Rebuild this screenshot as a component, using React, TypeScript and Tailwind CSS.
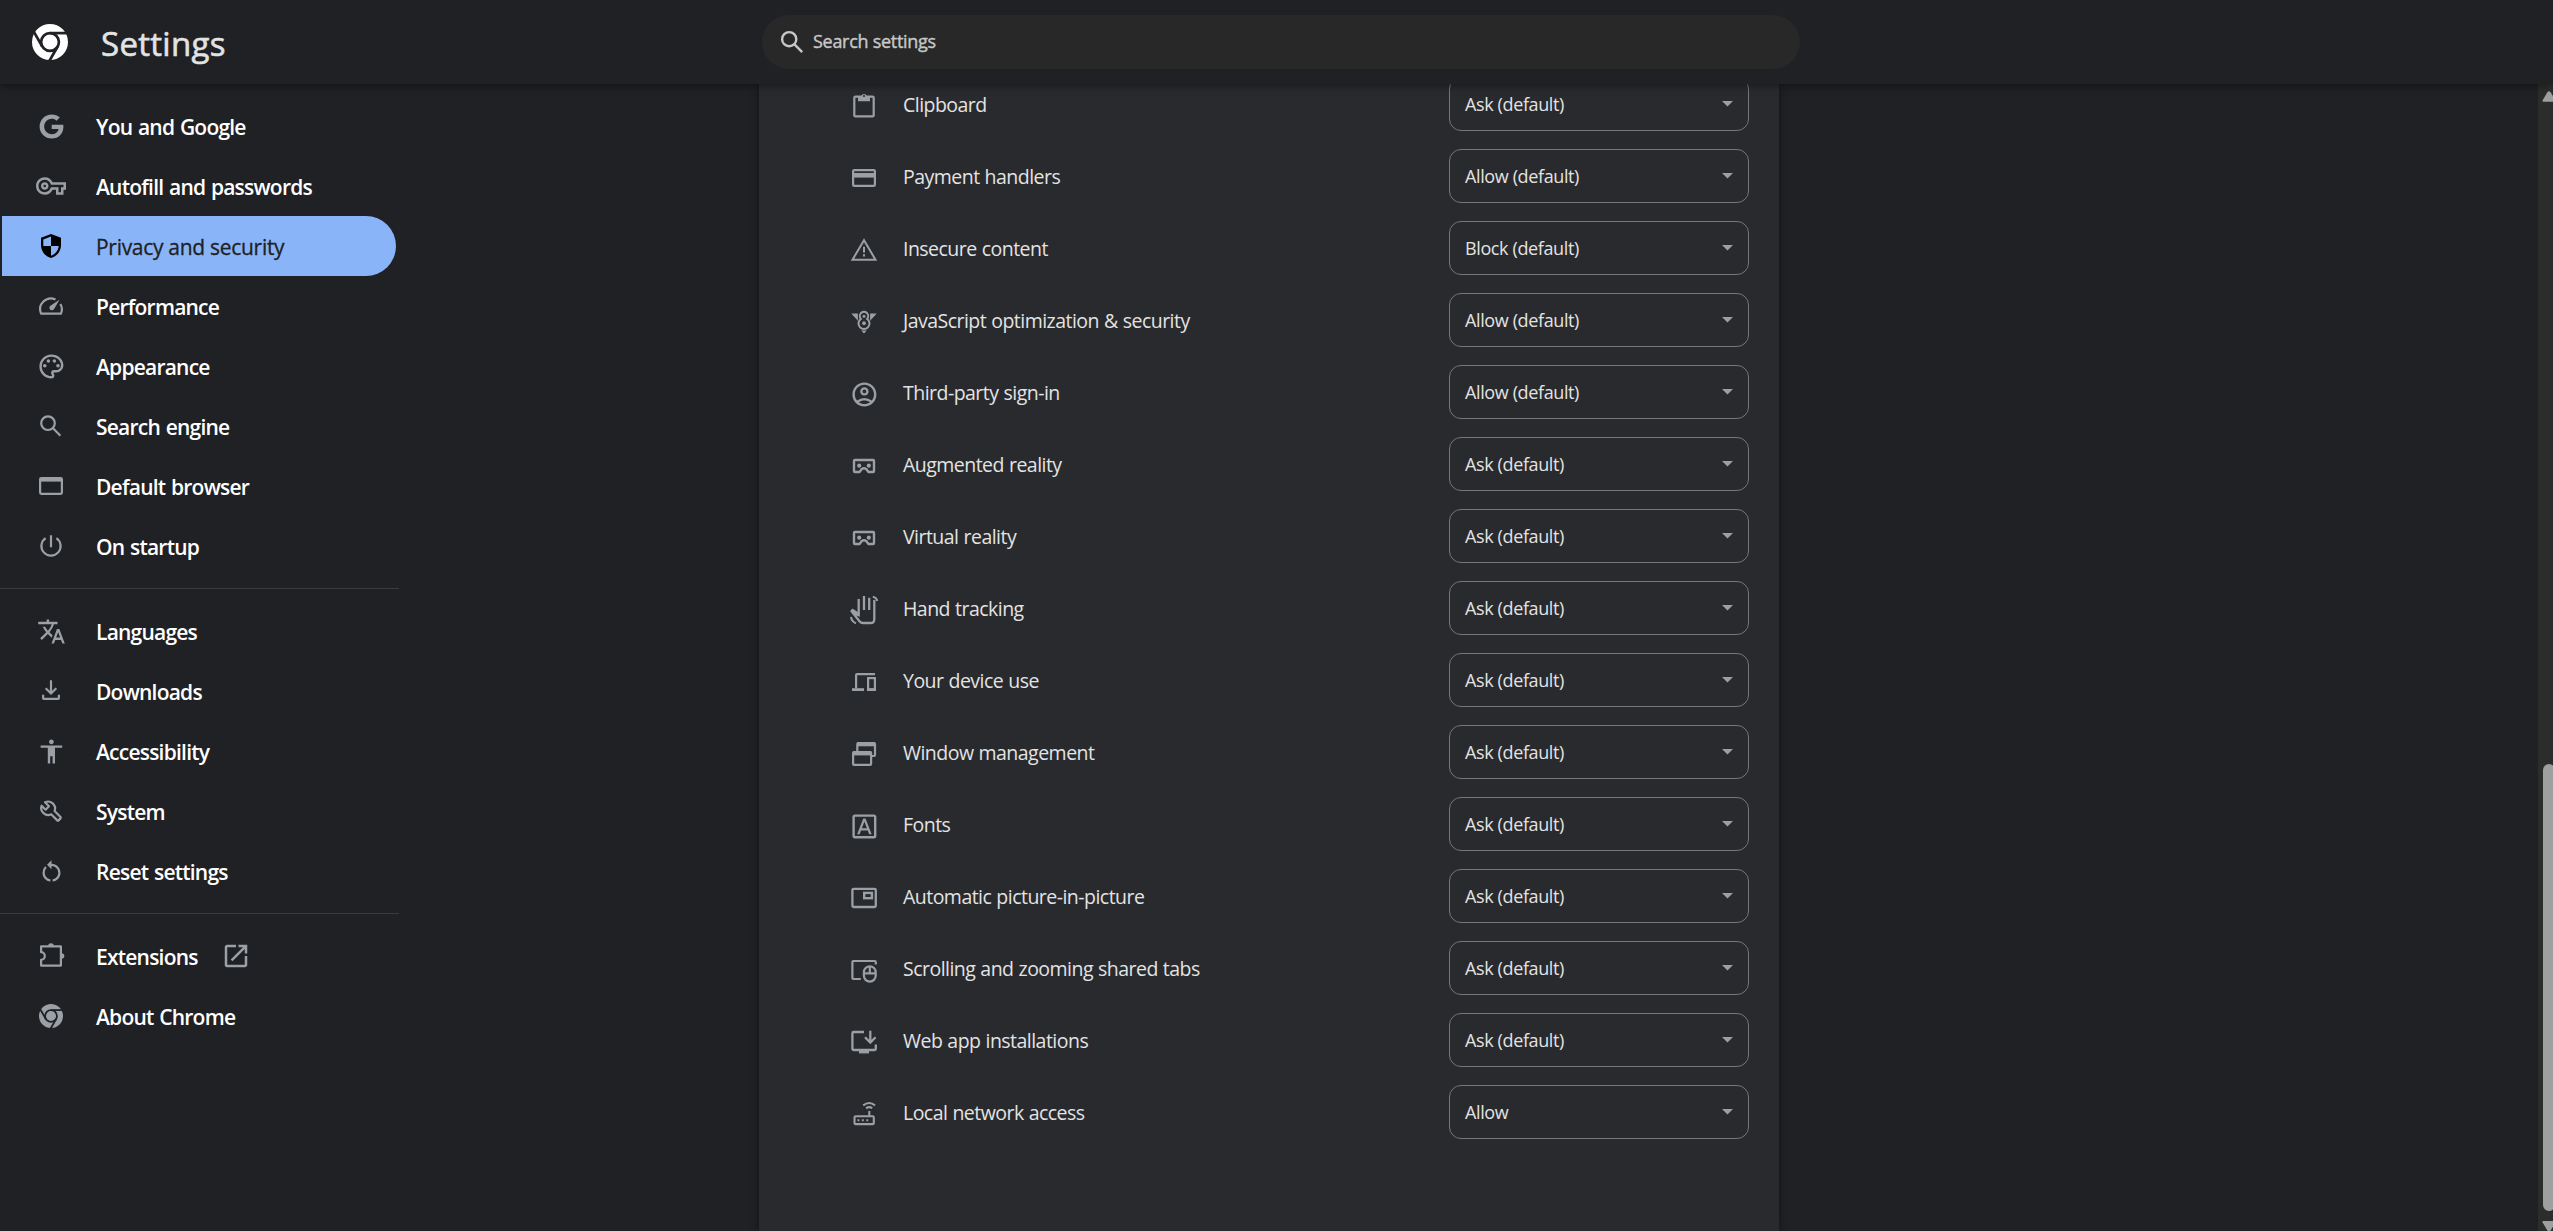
import type { ReactNode } from "react";
import { FaGoogle } from "react-icons/fa";
import {
  MdAccessibility,
  MdOpenInNew,
  MdOutlineAccountCircle,
  MdOutlineFontDownload,
  MdOutlinePalette,
  MdOutlineVpnKey,
  MdRestartAlt,
  MdTranslate,
} from "react-icons/md";

// 30x30 line icon, strokes follow the text colour
function Glyph({ children, w = 2.2 }: { children: ReactNode; w?: number }) {
  return (
    <svg width="30" height="30" viewBox="0 0 30 30" fill="none" stroke="currentColor" strokeWidth={w}>
      {children}
    </svg>
  );
}

const solid = { fill: "currentColor", stroke: "none" };

function ChromeMark({ size, bg }: { size: number; bg: string }) {
  return (
    <svg width={size} height={size} viewBox="-18 -18 36 36">
      <circle r="18" fill="currentColor" />
      <g stroke={bg} strokeWidth="2.7" fill="none">
        <circle r="8.9" />
        <path d="M0-8.9H20" />
        <path d="M0-8.9H20" transform="rotate(120)" />
        <path d="M0-8.9H20" transform="rotate(240)" />
      </g>
    </svg>
  );
}

const shield = (
  <Glyph>
    <path
      {...solid}
      fillRule="evenodd"
      d="M15 3 5 6.7V14c0 6.2 4.2 11.4 10 13 5.800-1.600 10-6.800 10-13V6.700L15 3ZM15 5.600V15H7.300V8.400L15 5.600ZM15 15h7.700c-.5 4.500-3.400 8.300-7.700 9.700V15Z"
    />
  </Glyph>
);

const speed = (
  <Glyph>
    <path d="M19.500 8.400A10.900 10.900 0 0 0 5 22.600H25A10.900 10.900 0 0 0 24.400 13" strokeLinejoin="round" />
    <path {...solid} d="M23.500 8.800 18.100 18a2.500 2.500 0 1 1-3.700-3.200L23.500 8.800Z" />
  </Glyph>
);

const magnifier = (
  <Glyph>
    <circle cx="12" cy="12.200" r="6.800" />
    <path d="m16.800 17 7.600 7.700" />
  </Glyph>
);

const browserWindow = (
  <Glyph>
    <rect x="4.100" y="7.100" width="21.800" height="15.700" rx="1.200" />
    <path d="M4 8.800h22" strokeWidth="3.600" />
  </Glyph>
);

const power = (
  <Glyph>
    <path d="M9.600 7.100A9.600 9.600 0 1 0 20.400 7.100M15 4.300v12" />
  </Glyph>
);

const download = (
  <Glyph>
    <path d="M15 4.300v13M9.700 12.200l5.300 5.300 5.300-5.300M7.100 18.800v3.200q0 .8.800.8h14.200q.8 0 .8-.8v-3.200" />
  </Glyph>
);

const wrench = (
  <Glyph w={2.200}>
    <path
      d="M9 6.300A7 7 0 0 1 18.600 15L24.300 20.800Q25.200 21.700 24.300 22.600L22.800 24.100Q21.900 25 21 24.100L15.200 18.300A7 7 0 0 1 5.600 9.700L9.600 13.700 13 10.300Z"
      strokeLinejoin="round"
    />
  </Glyph>
);

const puzzle = (
  <Glyph>
    <path
      d="M5.100 5.400H24.900V24.600H5.100V18.800c2 0 3.700-1.600 3.700-3.800s-1.700-3.800-3.700-3.800V5.400Z"
      strokeLinejoin="round"
    />
    <path {...solid} d="M12.200 5a2.800 2.800 0 0 1 5.600 0ZM25.500 12.200a2.800 2.800 0 0 1 0 5.600Z" />
  </Glyph>
);

const clipboard = (
  <Glyph>
    <rect x="5.300" y="5.600" width="19.400" height="19.800" rx="1.200" />
    <path {...solid} d="M9 5h3.300a2.800 2.800 0 0 1 5.400 0H21v5.300H9Z" />
    <circle cx="15" cy="5" r="1" fill="#292a2d" stroke="none" />
  </Glyph>
);

const card = (
  <Glyph>
    <rect x="4.100" y="7.100" width="21.800" height="15.800" rx="1.200" />
    <path d="M4 12.300h22" strokeWidth="4.600" />
  </Glyph>
);

const warning = (
  <Glyph w={2}>
    <path d="M15 5.300 3.500 24.700H26.500Z" />
    <path d="M15 11.800v5.600M15 19.300v2.300" />
  </Glyph>
);

const engine = (
  <Glyph w={2}>
    <path d="M11.900 11.900a4.200 4.200 0 1 1 6.200 0a5.500 5.500 0 1 1-6.200 0Z" />
    <circle {...solid} cx="15" cy="9.200" r="1.500" />
    <circle {...solid} cx="15" cy="16.200" r="1.900" />
    <path {...solid} d="M2.300 6.500h6.600v7.200ZM27.700 6.500h-6.600v7.200ZM12.300 23.600h5.400L15 26.400Z" />
  </Glyph>
);

const headset = (
  <Glyph w={2.400}>
    <path
      d="M6 9H24q1 0 1 1V20q0 1-1 1H19.500L17.200 18Q15 16.600 12.800 18L10.500 21H6Q5 21 5 20V10Q5 9 6 9Z"
      strokeLinejoin="round"
    />
    <circle {...solid} cx="10.200" cy="14.700" r="2.100" />
    <circle {...solid} cx="19.800" cy="14.700" r="2.100" />
  </Glyph>
);

const hand = (
  <Glyph w={2.300}>
    <path d="M9.700 4v15.800L3.400 15.200 2.600 16.200 10.700 26.500Q12 28 14 28h7.500q3.800 0 3.800-3.800V5M15 1v14M20.200 2.800v12.200" />
    <path {...solid} d="m2.200 15.500 2.300-1.200 5.200 3.500v3.400l-3.500-.6Z" />
    <path d="M1.900 22Q2.800 26.500 7 28.300M23.800 1.700Q27.600 2.400 28.200 6" strokeWidth="2" />
  </Glyph>
);

const devices = (
  <Glyph>
    <path d="M26 7.100H8.100Q7.100 7.100 7.100 8.100v13.500" />
    <path d="M3 22.600h12" strokeWidth="2.800" />
    <rect x="19.100" y="11.100" width="6.800" height="11.600" />
    <path d="M18 22.600h9" strokeWidth="2.800" />
  </Glyph>
);

const windows = (
  <Glyph>
    <rect x="4.100" y="13" width="18" height="12.900" rx="1" />
    <path d="M4 14.200h18.200" strokeWidth="4.400" />
    <path d="M8.300 12V5q0-1 1-1H25q1 0 1 1V16q0 1-1 1h-2.500" />
    <path d="M8 5.200h18" strokeWidth="4.200" />
  </Glyph>
);

const pip = (
  <Glyph w={2.300}>
    <rect x="3.400" y="5.800" width="23.400" height="18.200" rx="1.200" />
    <rect x="15.200" y="9.900" width="7.700" height="5.300" strokeWidth="2.400" />
  </Glyph>
);

const screenMouse = (
  <Glyph>
    <path d="M11.800 24H4.400q-1 0-1-1V7q0-1 1-1H25.600q1.200 0 1.200 1.200V9.500" />
    <rect x="14.900" y="11.300" width="11.800" height="15.300" rx="5.900" />
    <path d="M14.900 18.300h11.800M20.800 11.300v7" />
  </Glyph>
);

const install = (
  <Glyph w={2.300}>
    <path d="M15 5H4.600Q3.400 5 3.400 6.200V21.800Q3.400 23 4.600 23H25.600q1.200 0 1.200-1.200V17.500" />
    <path d="M10 25h10" strokeWidth="2.800" />
    <path d="M21.300 3.700v12M16 10.300l5.300 5.300 5.300-5.300" />
  </Glyph>
);

const router = (
  <Glyph w={2.100}>
    <rect x="5.500" y="17.200" width="19.300" height="7.900" rx="1.200" />
    <path d="M20.300 12v5" />
    <path d="M8.500 21.200h1.900M12.900 21.200h1.900M17.300 21.200h1.900" />
    <path d="M14.200 6.400Q20.200 1.600 26 6.400M17.100 9.300Q20.200 6.900 23.200 9.300" />
  </Glyph>
);

type NavItem = { label: string; icon: ReactNode; active?: boolean; external?: boolean };

const navGroups: NavItem[][] = [
  [
    { label: "You and Google", icon: <FaGoogle size={25} /> },
    { label: "Autofill and passwords", icon: <MdOutlineVpnKey size={30} /> },
    { label: "Privacy and security", icon: shield, active: true },
    { label: "Performance", icon: speed },
    { label: "Appearance", icon: <MdOutlinePalette size={28.8} /> },
    { label: "Search engine", icon: magnifier },
    { label: "Default browser", icon: browserWindow },
    { label: "On startup", icon: power },
  ],
  [
    { label: "Languages", icon: <MdTranslate size={29} /> },
    { label: "Downloads", icon: download },
    { label: "Accessibility", icon: <MdAccessibility size={28.8} /> },
    { label: "System", icon: wrench },
    { label: "Reset settings", icon: <MdRestartAlt size={27} /> },
  ],
  [
    { label: "Extensions", icon: puzzle, external: true },
    { label: "About Chrome", icon: <ChromeMark size={24} bg="#202124" /> },
  ],
];

const permissions = [
  { label: "Clipboard", value: "Ask (default)", icon: clipboard },
  { label: "Payment handlers", value: "Allow (default)", icon: card },
  { label: "Insecure content", value: "Block (default)", icon: warning },
  { label: "JavaScript optimization & security", value: "Allow (default)", icon: engine },
  { label: "Third-party sign-in", value: "Allow (default)", icon: <MdOutlineAccountCircle size={28.8} /> },
  { label: "Augmented reality", value: "Ask (default)", icon: headset },
  { label: "Virtual reality", value: "Ask (default)", icon: headset },
  { label: "Hand tracking", value: "Ask (default)", icon: hand },
  { label: "Your device use", value: "Ask (default)", icon: devices },
  { label: "Window management", value: "Ask (default)", icon: windows },
  { label: "Fonts", value: "Ask (default)", icon: <MdOutlineFontDownload size={28.8} /> },
  { label: "Automatic picture-in-picture", value: "Ask (default)", icon: pip },
  { label: "Scrolling and zooming shared tabs", value: "Ask (default)", icon: screenMouse },
  { label: "Web app installations", value: "Ask (default)", icon: install },
  { label: "Local network access", value: "Allow", icon: router },
];

function Header() {
  return (
    <header className="relative z-10 grid h-[84px] shrink-0 grid-cols-[762px_1038px_1fr] items-center bg-[#202124] shadow-[0_2px_8px_rgba(0,0,0,0.4)]">
      <div className="flex items-center pl-8 text-white">
        <ChromeMark size={36} bg="#202124" />
        <h1 className="ml-[33px] pt-[3px] text-[33px] leading-none font-medium tracking-[0.009em] text-[#e3e3e3] [-webkit-text-stroke:0.6px]">
          Settings
        </h1>
      </div>
      <div className="flex h-[54px] items-center rounded-full bg-[#282828] pl-[15px] text-[#c7c7c7]">
        <svg width="30" height="30" viewBox="0 0 30 30" fill="none" stroke="currentColor" strokeWidth="2.4">
          <circle cx="12.200" cy="12.200" r="7.100" />
          <path d="m17.200 17.200 8 8" />
        </svg>
        <span className="ml-1.5 pb-px text-[18px] font-medium tracking-[-0.016em] [-webkit-text-stroke:0.4px]">
          Search settings
        </span>
      </div>
    </header>
  );
}

function Sidebar() {
  return (
    <nav className="w-[399px] pt-3">
      {navGroups.map((group, i) => (
        <div key={i} className={i > 0 ? "mt-3 border-t border-[#3a3b3e] pt-3" : ""}>
          {group.map((item) => (
            <a
              key={item.label}
              className={`mr-[3px] ml-0.5 flex h-[60px] items-center rounded-r-full pl-[34px] ${
                item.active ? "bg-[#8ab4f8] text-black" : "text-[#9aa0a6]"
              }`}
            >
              <span className="flex size-[30px] items-center justify-center">{item.icon}</span>
              <span
                className={`ml-[30px] pt-[3px] text-[21px] whitespace-nowrap ${
                  item.active
                    ? "font-normal tracking-[-0.014em] text-[#202124] [-webkit-text-stroke:0.3px]"
                    : "font-semibold tracking-[-0.037em] text-white [word-spacing:1px]"
                }`}
              >
                {item.label}
              </span>
              {item.external && <MdOpenInNew size={30} className="ml-[23px]" />}
            </a>
          ))}
        </div>
      ))}
    </nav>
  );
}

export default function App() {
  return (
    <div className="flex h-screen flex-col overflow-hidden bg-[#202124] font-['Open_Sans','Noto_Sans',sans-serif]">
      <Header />
      <div className="grid min-h-0 flex-1 grid-cols-[759px_1020px_1fr_15px]">
        <Sidebar />

        <main className="bg-[#292a2d] shadow-[0_0_8px_rgba(0,0,0,0.45)]">
          <div className="-mt-4">
            {permissions.map((p) => (
              <div key={p.label} className="flex h-[72px] items-center pr-[30px] pl-[90px]">
                <span className="mt-1 flex size-[30px] items-center justify-center text-[#9aa0a6]">{p.icon}</span>
                <span className="ml-6 flex-1 pt-px text-[19.5px] tracking-[-0.027em] text-[#e3e3e3] [word-spacing:0.5px]">
                  {p.label}
                </span>
                <button className="flex h-[54px] w-[300px] items-center justify-between rounded-xl border border-[#757679] pr-[15px] pl-[15px] text-[18px] tracking-[-0.021em] text-[#e3e3e3]">
                  {p.value}
                  <svg width="11" height="6" viewBox="0 0 11 6" className="text-[#9aa0a6]">
                    <path d="M0 0h11L5.500 5.500Z" fill="currentColor" />
                  </svg>
                </button>
              </div>
            ))}
          </div>
        </main>

        <div />

        {/* scrollbar, cut off by the window edge */}
        <div className="flex flex-col overflow-hidden bg-[#2c2c2c] pt-[7px]">
          <svg width="22" height="11" viewBox="0 0 22 11" className="ml-1 shrink-0 text-[#9f9f9f]">
            <path d="M.5 9.500 5.200 1.500Q7 -1 8.800 1.500L13.500 9.500Q13.800 10.700 12.500 10.700H1.500Q.2 10.700.5 9.500Z" fill="currentColor" />
          </svg>
          <div className="mt-[662px] ml-[5px] h-[447px] w-3 shrink-0 rounded-full bg-[#9f9f9f]" />
          <svg width="22" height="11" viewBox="0 0 22 11" className="mt-2.5 ml-1 shrink-0 text-[#9f9f9f]">
            <path d="M.5 1.200 5.200 9.200Q7 11.500 8.800 9.200L13.500 1.200Q13.800 0 12.500 0H1.500Q.2 0 .5 1.200Z" fill="currentColor" />
          </svg>
        </div>
      </div>
    </div>
  );
}
